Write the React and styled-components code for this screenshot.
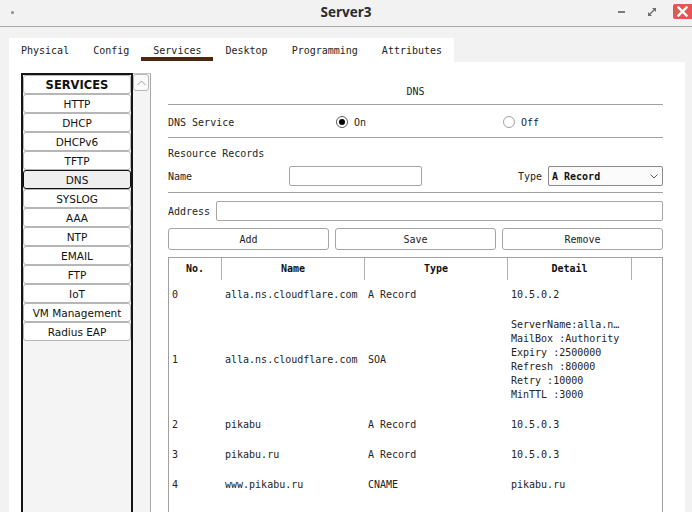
import React from 'react';
import styled, { createGlobalStyle } from 'styled-components';

const Global = createGlobalStyle`
  html, body { margin: 0; padding: 0; background: #f2f2f2; }
  body { width: 692px; height: 512px; overflow: hidden; }
  * { box-sizing: border-box; }
`;

const MONO = `"DejaVu Sans Mono", "Liberation Mono", monospace`;
const SANS = `"DejaVu Sans", "Noto Sans", sans-serif`;

const Window = styled.div`
  width: 692px;
  height: 512px;
  display: flex;
  flex-direction: column;
  background: #f2f2f2;
  overflow: hidden;
`;

const TitleBar = styled.div`
  flex: none;
  height: 27px;
  border-bottom: 1px solid #a8a8a8;
  display: grid;
  grid-template-columns: 1fr auto 1fr;
  align-items: start;
`;

const MenuDot = styled.span`
  width: 3px;
  height: 3px;
  border-radius: 50%;
  background: #8a8a8a;
  margin: 11px 0 0 11px;
`;

const Title = styled.div`
  font-family: "Open Sans", "Noto Sans", sans-serif;
  font-weight: 700;
  font-size: 13.5px;
  line-height: 24px;
  color: #2b2b2b;
`;

const WinControls = styled.div`
  display: flex;
  justify-content: flex-end;
  align-items: center;
  height: 23px;
`;

const MinBtn = styled.span`
  width: 7px;
  height: 2px;
  background: #7a7a7a;
  margin-right: 22px;
  margin-top: 1px;
`;

const RestoreBtn = styled.svg`
  width: 10px;
  height: 10px;
  margin-right: 16px;
`;

const CloseBtn = styled.div`
  width: 19px;
  height: 15px;
  background: #e85454;
  border-radius: 2px 0 0 2px;
  display: flex;
  align-items: center;
  justify-content: center;
`;

const Body = styled.div`
  flex: 1;
  min-height: 0;
  display: flex;
  flex-direction: column;
  padding: 11px 7px 0 9px;
`;

const TabStrip = styled.div`
  flex: none;
  display: flex;
  align-self: flex-start;
  height: 24px;
  background: #fff;
`;

const Tab = styled.div`
  display: flex;
  flex-direction: column;
  padding: 6px 0 0;
  font-family: ${MONO};
  font-size: 10px;
  line-height: 13px;
  color: #222;
`;

const TabLabel = styled.span`
  padding: 0 12px;
`;

const TabIndicator = styled.span`
  height: 4px;
  background: ${(p) => (p.$active ? '#4a2812' : 'transparent')};
`;

const Panel = styled.div`
  flex: 1;
  min-height: 0;
  background: #fff;
  display: flex;
  padding: 0 22px 0 12px;
  overflow: hidden;
`;

const SideArea = styled.div`
  display: flex;
  margin-top: 11px;
  flex: none;
`;

const ServiceList = styled.div`
  width: 112px;
  border: 2px solid #151515;
  border-bottom: none;
  background: #f4f4f4;
  display: flex;
  flex-direction: column;
`;

const ServiceItem = styled.div`
  height: 19px;
  border: 1px solid ${(p) => (p.$selected ? '#111' : '#b6b6b6')};
  border-radius: 3px;
  background: ${(p) => (p.$selected ? '#efefef' : '#fff')};
  font-family: ${SANS};
  font-size: ${(p) => (p.$header ? '11.5px' : '10.5px')};
  font-weight: ${(p) => (p.$header ? 700 : 400)};
  line-height: ${(p) => (p.$header ? '19px' : '18px')};
  text-align: center;
  color: #111;
  white-space: nowrap;
`;

const ScrollTrack = styled.div`
  width: 18px;
  background: #f4f4f4;
  border-top: 1px solid #c4c4c4;
  border-right: 1px solid #a8a8a8;
  padding: 0 1px 0 0;
`;

const ScrollUp = styled.div`
  width: 16px;
  height: 17px;
  border: 1px solid #b8b8b8;
  border-radius: 3px;
  background: #fafafa;
  display: flex;
  align-items: center;
  justify-content: center;
`;

const Content = styled.div`
  flex: 1;
  min-width: 0;
  margin-left: 17px;
  display: flex;
  flex-direction: column;
  font-family: ${MONO};
  font-size: 10px;
  line-height: 14px;
  color: #242424;
`;

const SectionTitle = styled.div`
  height: 43px;
  padding-top: 23px;
  text-align: center;
  border-bottom: 1px solid #a0a0a0;
`;

const ServiceRow = styled.div`
  height: 33px;
  padding-top: 4px;
  display: grid;
  grid-template-columns: 168px 167px 1fr;
  align-items: center;
  border-bottom: 1px solid #a0a0a0;
`;

const RadioLabel = styled.label`
  display: flex;
  align-items: center;
  gap: 6px;
  margin-top: -2px;
`;

const RadioText = styled.span`
  padding-top: 2px;
`;

const RadioCircle = styled.span`
  width: 12px;
  height: 12px;
  border-radius: 50%;
  border: 1px solid ${(p) => (p.$checked ? '#5a5a5a' : '#a2a2a2')};
  background: #fff;
  display: flex;
  align-items: center;
  justify-content: center;
`;

const RadioDot = styled.span`
  width: 6px;
  height: 6px;
  border-radius: 50%;
  background: #000;
`;

const SubHeading = styled.div`
  margin-top: 9px;
`;

const FieldRow = styled.div`
  display: flex;
  align-items: center;
  height: 20px;
  margin-top: ${(p) => p.$gap || 0}px;
`;

const FieldLabel = styled.span`
  flex: none;
  padding-top: 2px;
  width: ${(p) => (p.$w ? `${p.$w}px` : 'auto')};
  margin-left: ${(p) => (p.$push ? 'auto' : '0')};
  margin-right: ${(p) => (p.$mr ? `${p.$mr}px` : '0')};
`;

const TextInput = styled.div`
  height: 20px;
  width: ${(p) => (p.$w ? `${p.$w}px` : 'auto')};
  flex: ${(p) => (p.$w ? 'none' : '1')};
  border: 1px solid #a6a6a6;
  border-radius: 2px;
  background: #fff;
`;

const Select = styled.div`
  width: 115px;
  height: 20px;
  border: 1px solid #8a8a8a;
  border-radius: 2px;
  background: #fbfbfb;
  display: flex;
  align-items: center;
  justify-content: space-between;
  padding: 0 4px 0 3px;
  font-weight: 700;
  color: #111;
`;

const SelectValue = styled.span`
  padding-top: 2px;
`;

const Divider = styled.div`
  height: 1px;
  background: #a0a0a0;
  margin-top: ${(p) => p.$top}px;
`;

const ButtonRow = styled.div`
  display: grid;
  grid-template-columns: 1fr 1fr 1fr;
  gap: 6px;
  margin-top: 7px;
`;

const Button = styled.div`
  height: 22px;
  border: 1px solid #a6a6a6;
  border-radius: 3px;
  background: #fff;
  text-align: center;
  padding-top: 1px;
  line-height: 20px;
  color: #222;
`;

const Table = styled.div`
  margin-top: 7px;
  flex: 1;
  border: 1px solid #a0a0a0;
  border-bottom: none;
  display: grid;
  grid-template-columns: 53px 143px 143px 124px 1fr;
  align-content: start;
`;

const HeadCell = styled.div`
  height: 22px;
  line-height: 22px;
  text-align: center;
  font-weight: 700;
  color: #111;
  border-right: ${(p) => (p.$last ? 'none' : '1px solid #b0b0b0')};
`;

const Cell = styled.div`
  display: flex;
  flex-direction: column;
  justify-content: center;
  padding: 8px 0 8px 3px;
  line-height: 14px;
  white-space: pre;
  min-width: 0;
`;

const DetailLine = styled.span`
  overflow: hidden;
  text-overflow: ellipsis;
  white-space: nowrap;
  max-width: 112px;
`;

const services = [
  'HTTP', 'DHCP', 'DHCPv6', 'TFTP', 'DNS', 'SYSLOG', 'AAA', 'NTP',
  'EMAIL', 'FTP', 'IoT', 'VM Management', 'Radius EAP',
];

const tabs = ['Physical', 'Config', 'Services', 'Desktop', 'Programming', 'Attributes'];

const records = [
  { no: '0', name: 'alla.ns.cloudflare.com', type: 'A Record', detail: ['10.5.0.2'] },
  {
    no: '1',
    name: 'alla.ns.cloudflare.com',
    type: 'SOA',
    detail: [
      'ServerName:alla.ns.cloudflare.com',
      'MailBox :Authority',
      'Expiry :2500000',
      'Refresh :80000',
      'Retry :10000',
      'MinTTL :3000',
    ],
  },
  { no: '2', name: 'pikabu', type: 'A Record', detail: ['10.5.0.3'] },
  { no: '3', name: 'pikabu.ru', type: 'A Record', detail: ['10.5.0.3'] },
  { no: '4', name: 'www.pikabu.ru', type: 'CNAME', detail: ['pikabu.ru'] },
];

export default function App() {
  return (
    <Window>
      <Global />
      <TitleBar>
        <MenuDot />
        <Title>Server3</Title>
        <WinControls>
          <MinBtn />
          <RestoreBtn viewBox="0 0 10 10">
            <path d="M2.5 7.5 L7.5 2.5" stroke="#6e6e6e" strokeWidth="1.4" />
            <path d="M5 1 L9 1 L9 5 Z" fill="#6e6e6e" />
            <path d="M1 5 L1 9 L5 9 Z" fill="#6e6e6e" />
          </RestoreBtn>
          <CloseBtn>
            <svg width="11" height="11" viewBox="0 0 11 11">
              <path d="M1.5 1.5 L9.5 9.5 M9.5 1.5 L1.5 9.5" stroke="#fff" strokeWidth="2.4" strokeLinecap="square" />
            </svg>
          </CloseBtn>
        </WinControls>
      </TitleBar>
      <Body>
        <TabStrip>
          {tabs.map((t) => (
            <Tab key={t}>
              <TabLabel>{t}</TabLabel>
              <TabIndicator $active={t === 'Services'} />
            </Tab>
          ))}
        </TabStrip>
        <Panel>
          <SideArea>
            <ServiceList>
              <ServiceItem $header>SERVICES</ServiceItem>
              {services.map((s) => (
                <ServiceItem key={s} $selected={s === 'DNS'}>{s}</ServiceItem>
              ))}
            </ServiceList>
            <ScrollTrack>
              <ScrollUp>
                <svg width="9" height="6" viewBox="0 0 9 6">
                  <polyline points="0.5,5 4.5,1 8.5,5" fill="none" stroke="#9a9a9a" strokeWidth="1" />
                </svg>
              </ScrollUp>
            </ScrollTrack>
          </SideArea>
          <Content>
            <SectionTitle>DNS</SectionTitle>
            <ServiceRow>
              <span>DNS Service</span>
              <RadioLabel>
                <RadioCircle $checked><RadioDot /></RadioCircle>
                <RadioText>On</RadioText>
              </RadioLabel>
              <RadioLabel>
                <RadioCircle />
                <RadioText>Off</RadioText>
              </RadioLabel>
            </ServiceRow>
            <SubHeading>Resource Records</SubHeading>
            <FieldRow $gap={5}>
              <FieldLabel $w={121}>Name</FieldLabel>
              <TextInput $w={133} />
              <FieldLabel $push $mr={6}>Type</FieldLabel>
              <Select>
                <SelectValue>A Record</SelectValue>
                <svg width="8" height="5" viewBox="0 0 8 5">
                  <polyline points="0.5,0.5 4,4 7.5,0.5" fill="none" stroke="#555" strokeWidth="1" />
                </svg>
              </Select>
            </FieldRow>
            <Divider $top={6} />
            <FieldRow $gap={8}>
              <FieldLabel $mr={6}>Address</FieldLabel>
              <TextInput />
            </FieldRow>
            <ButtonRow>
              <Button>Add</Button>
              <Button>Save</Button>
              <Button>Remove</Button>
            </ButtonRow>
            <Table>
              <HeadCell>No.</HeadCell>
              <HeadCell>Name</HeadCell>
              <HeadCell>Type</HeadCell>
              <HeadCell>Detail</HeadCell>
              <HeadCell $last />
              {records.map((r) => (
                <React.Fragment key={r.no}>
                  <Cell>{r.no}</Cell>
                  <Cell>{r.name}</Cell>
                  <Cell>{r.type}</Cell>
                  <Cell>
                    {r.detail.map((d) => (
                      <DetailLine key={d}>{d}</DetailLine>
                    ))}
                  </Cell>
                  <Cell />
                </React.Fragment>
              ))}
            </Table>
          </Content>
        </Panel>
      </Body>
    </Window>
  );
}
